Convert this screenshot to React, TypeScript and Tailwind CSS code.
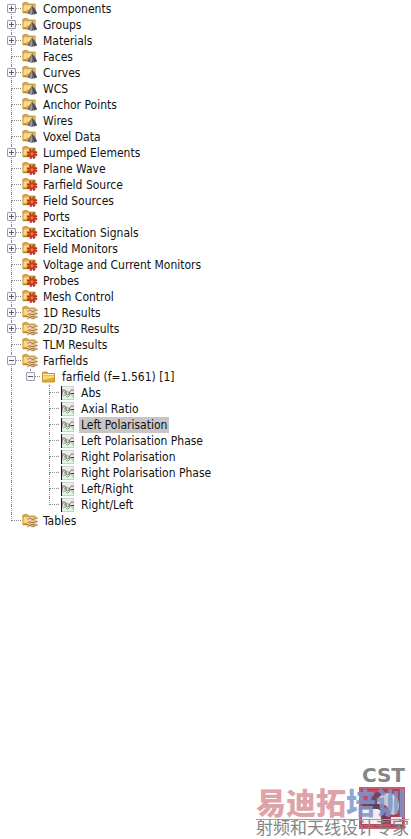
import { useState } from "react";

type IconKind = "cone" | "gear" | "wave" | "folder" | "plot";

interface TreeNode {
  label: string;
  icon: IconKind;
  expandable?: boolean;
  children?: TreeNode[];
}

const leaf = (label: string, icon: IconKind): TreeNode => ({ label, icon });
const branch = (label: string, icon: IconKind, children?: TreeNode[]): TreeNode => ({
  label,
  icon,
  expandable: true,
  children,
});

const nodes: TreeNode[] = [
  branch("Components", "cone"),
  branch("Groups", "cone"),
  branch("Materials", "cone"),
  leaf("Faces", "cone"),
  branch("Curves", "cone"),
  leaf("WCS", "cone"),
  leaf("Anchor Points", "cone"),
  leaf("Wires", "cone"),
  leaf("Voxel Data", "cone"),
  branch("Lumped Elements", "gear"),
  leaf("Plane Wave", "gear"),
  leaf("Farfield Source", "gear"),
  leaf("Field Sources", "gear"),
  branch("Ports", "gear"),
  branch("Excitation Signals", "gear"),
  branch("Field Monitors", "gear"),
  leaf("Voltage and Current Monitors", "gear"),
  leaf("Probes", "gear"),
  branch("Mesh Control", "gear"),
  branch("1D Results", "wave"),
  branch("2D/3D Results", "wave"),
  leaf("TLM Results", "wave"),
  branch("Farfields", "wave", [
    branch("farfield (f=1.561) [1]", "folder", [
      leaf("Abs", "plot"),
      leaf("Axial Ratio", "plot"),
      leaf("Left Polarisation", "plot"),
      leaf("Left Polarisation Phase", "plot"),
      leaf("Right Polarisation", "plot"),
      leaf("Right Polarisation Phase", "plot"),
      leaf("Left/Right", "plot"),
      leaf("Right/Left", "plot"),
    ]),
  ]),
  leaf("Tables", "wave"),
];

function Folder() {
  return (
    <>
      <path d="M.8 11.8V2.4L1.6 1.6H5.4L6.8 3H13.2V11.8Z" fill="#dba83c" stroke="#c0912f" strokeWidth=".8" />
      <path d="M1.5 4.2H12.5V6.5L1.5 10.5Z" fill="#f7da8c" />
      <path d="M1.5 11.5H13" stroke="#a87920" strokeWidth=".8" />
    </>
  );
}

function NodeIcon({ kind }: { kind: IconKind }) {
  return (
    <svg viewBox="0 0 16 16" className="ml-px size-4 shrink-0" aria-hidden="true">
      {kind !== "plot" && kind !== "folder" && <Folder />}
      {kind === "folder" && (
        <>
          <path d="M1.5 13V4L2.5 3H6L7.5 4.5H13.5V13Z" fill="#dfa92e" stroke="#c39330" />
          <path d="M2 6.5H13V8.5L2 11Z" fill="#f8d878" />
          <path d="M2 5.5H13" stroke="#fff0bd" />
        </>
      )}
      {kind === "cone" && (
        <>
          <path d="M10.3 4L5.6 12C6.6 14.2 13.8 14.2 15.2 12Z" fill="#66656e" />
          <path d="M10.2 5L7.4 12.4L10 13Z" fill="#9d9da8" />
          <path d="M10.4 5L12 13L15 12Z" fill="#4b4a52" />
        </>
      )}
      {kind === "gear" && (
        <>
          <circle cx="10" cy="8.8" r="3.6" fill="#cf3a20" />
          <circle
            cx="10"
            cy="8.8"
            r="4.3"
            fill="none"
            stroke="#b92f1b"
            strokeWidth="2"
            strokeDasharray="2.1 1.277"
          />
          <circle cx="10" cy="8.8" r="1.3" fill="#e98a68" />
        </>
      )}
      {kind === "wave" && (
        <g fill="none" strokeLinecap="round">
          <path
            d="M6 6.3C8 3.8 9 6.5 11 6.3S13.5 4.5 15 5M6 9.8C8 7.3 9 10 11 9.8S13.5 8 15 8.5M6 13.3C8 10.8 9 13.5 11 13.3S13.5 11.5 15 12"
            stroke="#f0d5a4"
            strokeWidth="2.2"
          />
          <path
            d="M6 6.3C8 3.8 9 6.5 11 6.3S13.5 4.5 15 5M6 9.8C8 7.3 9 10 11 9.8S13.5 8 15 8.5M6 13.3C8 10.8 9 13.5 11 13.3S13.5 11.5 15 12"
            stroke="#80645f"
          />
        </g>
      )}
      {kind === "plot" && (
        <g fill="none">
          <path d="M1 1H14V15H1Z" fill="#eceeec" />
          <path d="M1 1.5H14M1 14.5H14M13.5 1V15" stroke="#cdd1cd" />
          <path d="M9 8.5H14" stroke="#333" />
          <path d="M2 4.5C4.5 3.5 5 12 7.5 12S10 8 11 8.5S12.5 12 13.5 12" stroke="#5cc07c" />
          <path d="M2 8C3 11.5 4.5 12 5.5 8.5S8 5 8.5 8.5" stroke="#6bb884" />
          <path d="M2 8.5C3 4 5 3.5 6 7S8 11.5 9.5 8S12 4 13.5 6" stroke="#bc4650" />
          <path d="M1.5 1V15" stroke="#111" />
        </g>
      )}
    </svg>
  );
}

/* One 19px column of the guide lines, split into an upper and a lower half. */
function Guide({ up, down, across }: { up: boolean; down: boolean; across: boolean }) {
  return (
    <span className="grid h-4 w-[19px] grid-rows-2 pl-[9px]" aria-hidden="true">
      <span
        className={`border-dotted border-[#8a8a8a] ${up ? "border-l" : ""} ${across ? "border-b" : ""}`}
      />
      <span className={`border-dotted border-[#8a8a8a] ${down ? "border-l" : ""}`} />
    </span>
  );
}

function Toggle({ open, label, onClick }: { open: boolean; label: string; onClick: () => void }) {
  return (
    <button
      type="button"
      aria-label={`${open ? "Collapse" : "Expand"} ${label}`}
      onClick={onClick}
      className="absolute top-[3px] left-[5px] size-[9px] rounded-[1px] border border-[#9a9fa9] bg-[#f7f8fa]"
    >
      <svg viewBox="0 0 7 7" className="size-[7px]" aria-hidden="true">
        <path d={open ? "M1 3.5H6" : "M1 3.5H6M3.5 1V6"} stroke="#4d5b80" />
      </svg>
    </button>
  );
}

interface BranchProps {
  items: TreeNode[];
  trail: boolean[];
  selected: string;
  onSelect: (label: string) => void;
}

function Branch({ items, trail, selected, onSelect }: BranchProps) {
  return (
    <ul role={trail.length === 0 ? "tree" : "group"}>
      {items.map((node, i) => (
        <Item
          key={node.label}
          node={node}
          first={trail.length === 0 && i === 0}
          last={i === items.length - 1}
          trail={trail}
          selected={selected}
          onSelect={onSelect}
        />
      ))}
    </ul>
  );
}

function Item({
  node,
  first,
  last,
  trail,
  selected,
  onSelect,
}: Omit<BranchProps, "items"> & { node: TreeNode; first: boolean; last: boolean }) {
  const [open, setOpen] = useState(Boolean(node.children));
  const active = selected === node.label;
  return (
    <li role="treeitem" aria-selected={active}>
      <div className="flex h-4 items-center">
        {trail.map((continues, depth) => (
          <Guide key={depth} up={continues} down={continues} across={false} />
        ))}
        <span className="relative">
          <Guide up={!first} down={!last} across />
          {node.expandable && <Toggle open={open} label={node.label} onClick={() => setOpen(!open)} />}
        </span>
        <NodeIcon kind={node.icon} />
        <button
          type="button"
          onClick={() => onSelect(node.label)}
          className={`ml-[3px] h-4 px-0.5 leading-4 whitespace-nowrap ${active ? "bg-[#c6c6c6]" : ""}`}
        >
          {node.label}
        </button>
      </div>
      {open && node.children && (
        <Branch items={node.children} trail={[...trail, !last]} selected={selected} onSelect={onSelect} />
      )}
    </li>
  );
}

function CstMark() {
  return (
    <svg viewBox="0 0 46 42" className="h-[42px] w-[46px]" aria-hidden="true">
      <path d="M0 0H46V42H0Z" fill="#cf5a70" />
      <path d="M2 2H44V40H2Z" fill="#a8415c" />
      <path d="M3 3H20L3 16Z" fill="#bf5068" />
      <path d="M3 22C6 11 14 5 24 5L18 22Z" fill="#70455c" />
      <path d="M3 22H22V38H3Z" fill="#f4eef0" />
      <path d="M8 22C10 15 17 14 22 20V24C17 20 12 20 8 22Z" fill="#5f4257" />
      <path d="M18 17C18 10 23 6 29 6C37 6 41 13 40 21C39 27 35 29 31 27C31 20 25 16 18 17Z" fill="#c6c9d2" />
      <path d="M28 8C35 8 39 14 37 23" fill="none" stroke="#e6e8ee" strokeWidth="2" />
      <path d="M22 23C26 22 30 24 31 29V36H22Z" fill="#7a3850" />
      <path d="M32 30H43V38H32Z" fill="#eee3e6" />
      <path d="M3 38H43" stroke="#b9475d" strokeWidth="2" />
    </svg>
  );
}

function Watermark() {
  return (
    <footer className="relative mr-0.5 mb-px self-end">
      <div className="absolute right-1 bottom-[9px] flex flex-col items-end gap-0.5">
        <span className="font-['DejaVu_Sans'] text-[20px] leading-5 font-bold text-[#858585]">CST</span>
        <CstMark />
      </div>
      <p className="relative flex border-b border-[#a0a0a0] pb-0.5 font-['Noto_Sans_CJK_SC',sans-serif] text-[30px] leading-8 font-black">
        <span className="text-[#dea3a8]">易迪拓</span>
        <span className="text-[#7c96cc]/85">培训</span>
      </p>
      <p className="relative font-['Liberation_Serif','Noto_Sans_CJK_SC',serif] text-[17px] leading-[18px] text-[#858585]">
        射频和天线设计专家
      </p>
    </footer>
  );
}

export default function App() {
  const [selected, setSelected] = useState("Left Polarisation");
  return (
    <main className="flex min-h-screen flex-col justify-between bg-white pt-px font-['DejaVu_Sans_Condensed','DejaVu_Sans',sans-serif] text-[12px] text-[#111]">
      <nav aria-label="Navigation tree" className="pl-0.5">
        <Branch items={nodes} trail={[]} selected={selected} onSelect={setSelected} />
      </nav>
      <Watermark />
    </main>
  );
}
